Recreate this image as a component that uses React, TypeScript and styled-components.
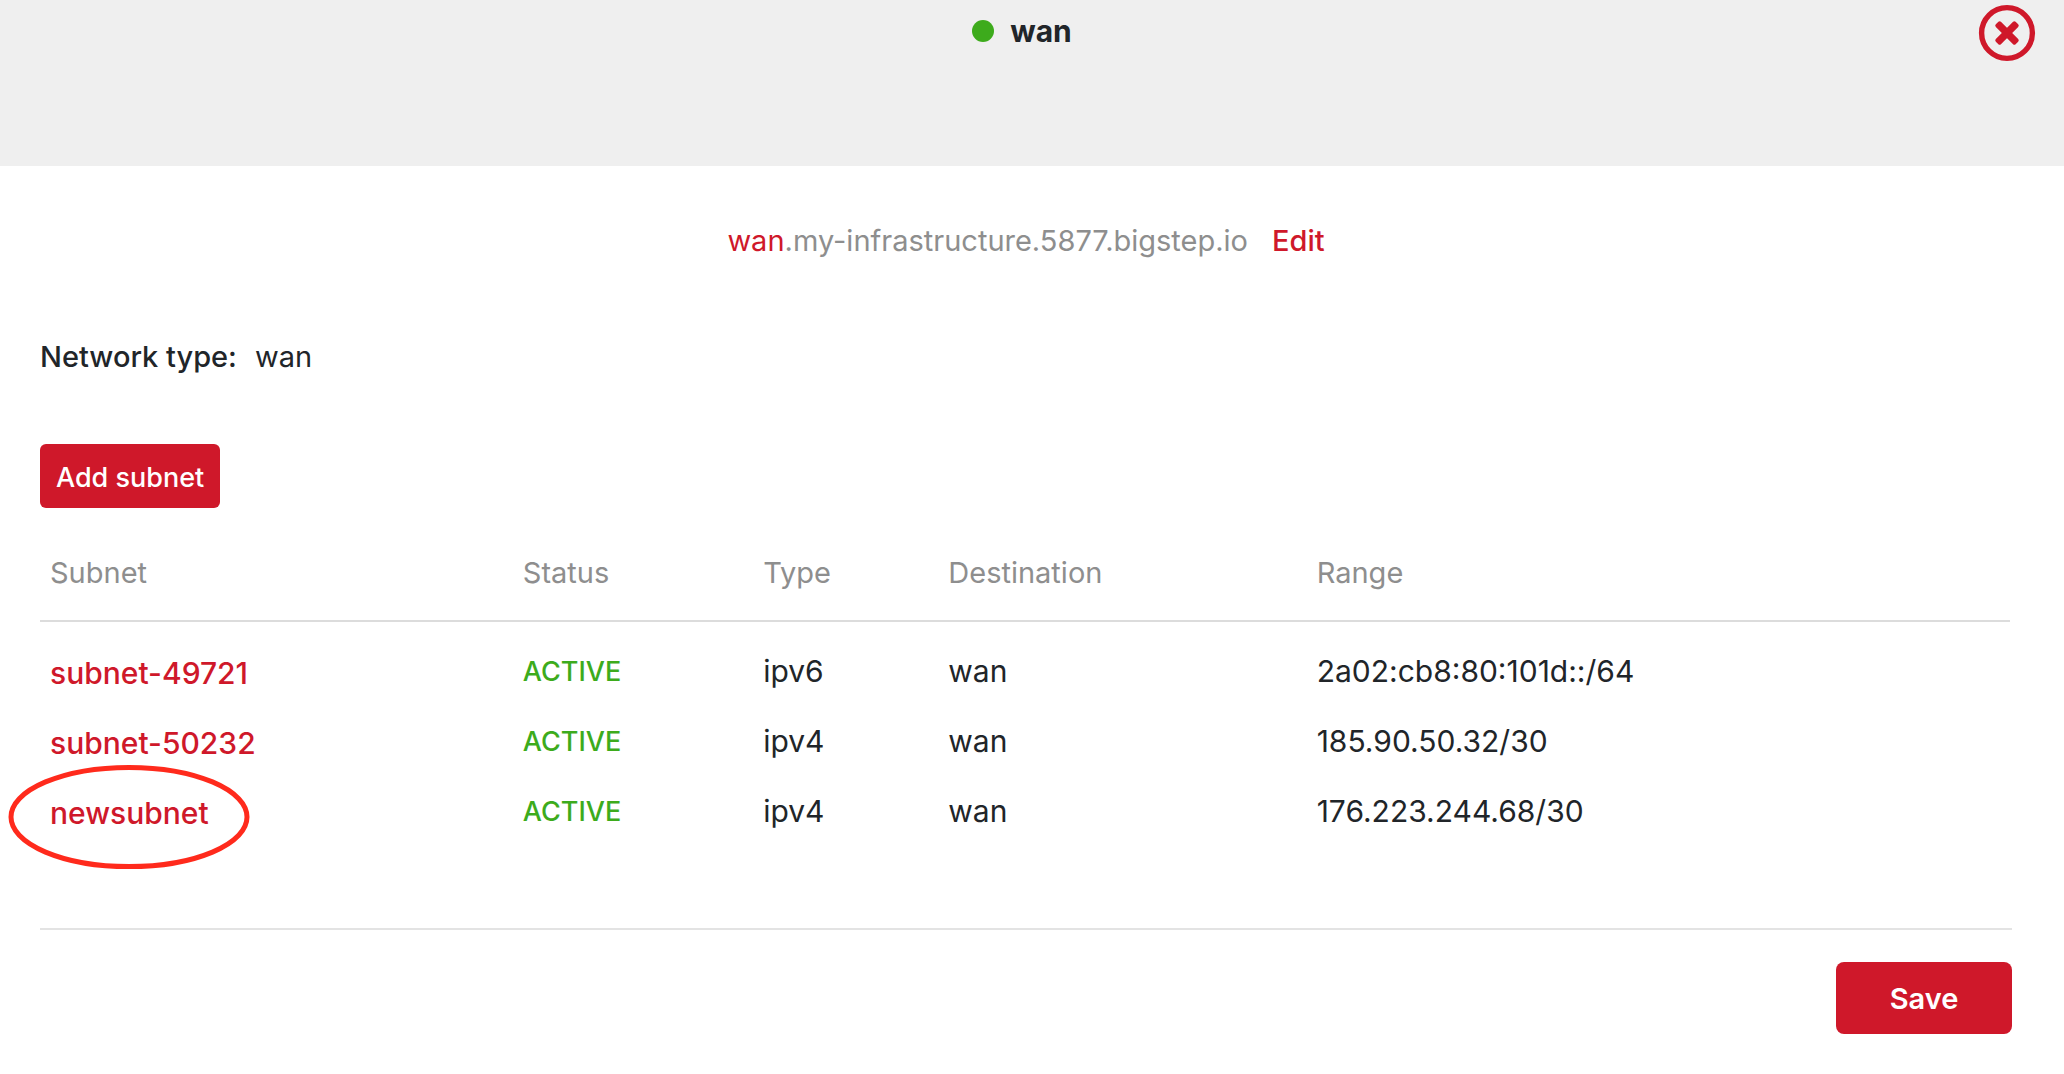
import React from "react";
import styled, { createGlobalStyle } from "styled-components";

const red = "#cf182a";
const green = "#3dab1c";
const ink = "#212529";
const muted = "#8e8e8e";

const GlobalStyle = createGlobalStyle`
  *, *::before, *::after { box-sizing: border-box; }
  body {
    margin: 0;
    background: #fff;
    color: ${ink};
    font-family: Inter, "Liberation Sans", sans-serif;
    font-size: 30px;
    line-height: 46px;
  }
  button { font: inherit; cursor: pointer; }
`;

const Header = styled.header`
  display: grid;
  grid-template-columns: 1fr auto 1fr;
  align-items: start;
  height: 166px;
  padding: 4px 28px;
  background: #efefef;
`;

const Title = styled.h1`
  grid-column: 2;
  display: flex;
  align-items: center;
  gap: 16px;
  margin: 0;
  padding: 4px 20px 0 0;
  font-size: 30px;
  font-weight: 700;
  line-height: 46px;
`;

const Dot = styled.span`
  width: 22px;
  height: 22px;
  border-radius: 50%;
  background: ${green};
`;

const CloseButton = styled.button`
  justify-self: end;
  display: block;
  padding: 0;
  border: 0;
  background: none;
  color: ${red};
  svg { display: block; }
`;

const HostLine = styled.p`
  display: flex;
  justify-content: center;
  gap: 24px;
  margin: 0;
  padding: 52px 52px 0 40px;
  color: ${muted};
  font-size: 29px;
`;

const HostName = styled.span`
  color: ${red};
`;

const Link = styled.a`
  color: ${red};
  font-weight: 500;
  text-decoration: none;
`;

const Main = styled.main`
  padding: 70px 54px 0 40px;
`;

const Field = styled.dl`
  display: flex;
  gap: 18px;
  margin: 0 0 64px;
  font-size: 29px;
  dt { font-weight: 500; }
  dd { margin: 0; }
`;

const Button = styled.button<{ $large?: boolean }>`
  display: block;
  min-width: ${(p) => (p.$large ? "176px" : "180px")};
  height: ${(p) => (p.$large ? "72px" : "64px")};
  padding: ${(p) => (p.$large ? "2px 16px 0" : "4px 16px 0")};
  border: 0;
  border-radius: ${(p) => (p.$large ? "8px" : "6px")};
  background: ${red};
  color: #fff;
  font-size: ${(p) => (p.$large ? "29px" : "27px")};
  font-weight: ${(p) => (p.$large ? 600 : 500)};
  line-height: 46px;
  white-space: nowrap;
`;

const Table = styled.table`
  width: 100%;
  margin-top: 29px;
  table-layout: fixed;
  border-collapse: collapse;
  text-align: left;
`;

const Column = styled.col<{ $share?: string }>`
  width: ${(p) => p.$share ?? "auto"};
`;

const HeadCell = styled.th`
  height: 84px;
  padding: 0 10px 12px;
  border-bottom: 2px solid #dcdcdc;
  color: ${muted};
  font-size: 29px;
  font-weight: 400;
`;

const Body = styled.tbody`
  &::before {
    content: "";
    display: table-row;
    height: 17px;
  }
`;

const Cell = styled.td`
  height: 70px;
  padding: 0 10px 4px;
`;

const NameCell = styled(Cell)`
  padding-bottom: 0;
`;

const Status = styled.span`
  color: ${green};
  font-size: 27px;
  font-weight: 500;
`;

const Marked = styled.span`
  position: relative;
`;

const Ring = styled.svg`
  position: absolute;
  top: -31px;
  left: -42px;
  pointer-events: none;
`;

const Footer = styled.footer`
  display: flex;
  justify-content: flex-end;
  margin: 80px 52px 40px 40px;
  padding-top: 32px;
  border-top: 2px solid #e3e3e3;
`;

const subnets = [
  { name: "subnet-49721", type: "ipv6", destination: "wan", range: "2a02:cb8:80:101d::/64" },
  { name: "subnet-50232", type: "ipv4", destination: "wan", range: "185.90.50.32/30" },
  { name: "newsubnet", type: "ipv4", destination: "wan", range: "176.223.244.68/30", marked: true },
];

export default function App() {
  return (
    <>
      <GlobalStyle />
      <Header>
        <Title>
          <Dot />
          wan
        </Title>
        <CloseButton type="button" aria-label="Close">
          <svg width="58" height="58" viewBox="0 0 58 58">
            <circle cx="29" cy="29" r="25.4" fill="none" stroke="currentColor" strokeWidth="5.4" />
            <g fill="currentColor">
              <rect x="15" y="25.4" width="28" height="7.2" rx="1.8" transform="rotate(45 29 29)" />
              <rect x="15" y="25.4" width="28" height="7.2" rx="1.8" transform="rotate(-45 29 29)" />
            </g>
          </svg>
        </CloseButton>
      </Header>
      <HostLine>
        <span>
          <HostName>wan</HostName>.my-infrastructure.5877.bigstep.io
        </span>
        <Link href="#edit">Edit</Link>
      </HostLine>
      <Main>
        <Field>
          <dt>Network type:</dt>
          <dd>wan</dd>
        </Field>
        <Button type="button">Add subnet</Button>
        <Table>
          <colgroup>
            <Column $share="24%" />
            <Column $share="12.2%" />
            <Column $share="9.4%" />
            <Column $share="18.7%" />
            <Column />
          </colgroup>
          <thead>
            <tr>
              <HeadCell>Subnet</HeadCell>
              <HeadCell>Status</HeadCell>
              <HeadCell>Type</HeadCell>
              <HeadCell>Destination</HeadCell>
              <HeadCell>Range</HeadCell>
            </tr>
          </thead>
          <Body>
            {subnets.map((s) => (
              <tr key={s.name}>
                <NameCell>
                  {s.marked ? (
                    <Marked>
                      <Link href={`#${s.name}`}>{s.name}</Link>
                      <Ring width="242" height="106" viewBox="0 0 242 106" fill="none" aria-hidden="true">
                        <ellipse cx="121" cy="53" rx="118" ry="49.6" stroke="#ff2a1c" strokeWidth="5" />
                      </Ring>
                    </Marked>
                  ) : (
                    <Link href={`#${s.name}`}>{s.name}</Link>
                  )}
                </NameCell>
                <Cell>
                  <Status>ACTIVE</Status>
                </Cell>
                <Cell>{s.type}</Cell>
                <Cell>{s.destination}</Cell>
                <Cell>{s.range}</Cell>
              </tr>
            ))}
          </Body>
        </Table>
      </Main>
      <Footer>
        <Button type="button" $large>
          Save
        </Button>
      </Footer>
    </>
  );
}
